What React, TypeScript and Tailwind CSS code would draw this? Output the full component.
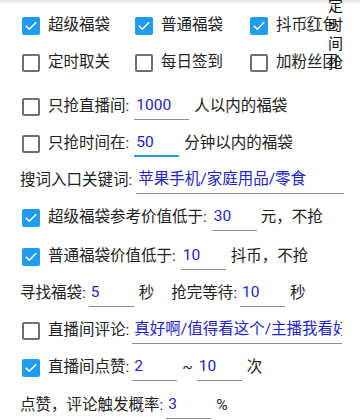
import * as React from "react";

const FONT = { fontFamily: '"Roboto", "Noto Sans CJK SC", sans-serif' };

const Check: React.FC<{ checked?: boolean }> = ({ checked }) =>
  checked ? (
    <span className="flex h-[18px] w-[18px] shrink-0 items-center justify-center rounded-[2px] bg-[#1f9cf0]">
      <svg width="14" height="14" viewBox="0 0 24 24" fill="none">
        <path d="M4 12.5l5 5L20 6.5" stroke="#fff" strokeWidth="2.6" strokeLinecap="square" />
      </svg>
    </span>
  ) : (
    <span className="h-[18px] w-[18px] shrink-0 rounded-[2px] border-2 border-[#6f6f6f]" />
  );

const Field: React.FC<{ value: string; w: number; focused?: boolean; className?: string }> = ({
  value,
  w,
  focused,
  className = "",
}) => (
  <span
    className={`flex h-[26px] shrink-0 items-start overflow-hidden whitespace-nowrap pl-[2px] text-[#2323cc] ${
      focused ? "border-b-2 border-[#1ea0e0]" : "border-b border-[#8c8c8c]"
    } ${className}`}
    style={{ width: w }}
  >
    {value}
  </span>
);

const Row: React.FC<{ children: React.ReactNode; className?: string }> = ({ children, className = "" }) => (
  <div className={`flex h-[37px] items-center whitespace-nowrap ${className}`}>{children}</div>
);

export default function App() {
  return (
    <div className="relative h-[420px] w-[360px] overflow-hidden bg-white text-[15.5px] text-[#222]" style={FONT}>
      {/* top shadow */}
      <div className="absolute left-0 right-0 top-0 h-[4px] bg-gradient-to-b from-[#e4e4e4] to-transparent" />

      <div className="pt-[7px]">
        <Row className="pl-[22px]">
          <div className="flex w-[113px] items-center gap-[8px]">
            <Check checked />
            <span>超级福袋</span>
          </div>
          <div className="flex w-[115px] items-center gap-[8px]">
            <Check checked />
            <span>普通福袋</span>
          </div>
          <div className="flex items-center gap-[8px]">
            <Check checked />
            <span>抖币红包</span>
          </div>
        </Row>
        <Row className="mb-[7px] pl-[22px]">
          <div className="flex w-[113px] items-center gap-[8px]">
            <Check />
            <span>定时取关</span>
          </div>
          <div className="flex w-[115px] items-center gap-[8px]">
            <Check />
            <span>每日签到</span>
          </div>
          <div className="flex items-center gap-[8px]">
            <Check />
            <span>加粉丝团</span>
          </div>
        </Row>

        <Row className="pl-[22px]">
          <Check />
          <span className="ml-[8px]">只抢直播间:</span>
          <Field value="1000" w={55} className="ml-[5px]" />
          <span className="ml-[5px]">人以内的福袋</span>
        </Row>
        <Row className="pl-[22px]">
          <Check />
          <span className="ml-[8px]">只抢时间在:</span>
          <Field value="50" w={45} focused className="ml-[5px]" />
          <span className="ml-[5px]">分钟以内的福袋</span>
        </Row>

        <Row className="pl-[20px]">
          <span>搜词入口关键词:</span>
          <Field value="苹果手机/家庭用品/零食" w={208} className="ml-[4px]" />
        </Row>

        <Row className="pl-[22px]">
          <Check checked />
          <span className="ml-[8px]">超级福袋参考价值低于:</span>
          <Field value="30" w={45} className="ml-[5px]" />
          <span className="ml-[4px]">元，不抢</span>
        </Row>
        <Row className="mt-[2px] pl-[22px]">
          <Check checked />
          <span className="ml-[8px]">普通福袋价值低于:</span>
          <Field value="10" w={45} className="ml-[5px]" />
          <span className="ml-[5px]">抖币，不抢</span>
        </Row>

        <Row className="pl-[20px]">
          <span>寻找福袋:</span>
          <Field value="5" w={45} className="ml-[3px]" />
          <span className="ml-[5px]">秒</span>
          <span className="ml-[17px]">抢完等待:</span>
          <Field value="10" w={45} className="ml-[3px]" />
          <span className="ml-[5px]">秒</span>
        </Row>

        <Row className="pl-[22px]">
          <Check />
          <span className="ml-[8px]">直播间评论:</span>
          <Field value="真好啊/值得看这个/主播我看好" w={210} className="ml-[3px]" />
        </Row>

        <Row className="pl-[22px]">
          <Check checked />
          <span className="ml-[8px]">直播间点赞:</span>
          <Field value="2" w={45} className="ml-[3px]" />
          <span className="ml-[5px]">~</span>
          <Field value="10" w={45} className="ml-[4px]" />
          <span className="ml-[5px]">次</span>
        </Row>

        <Row className="mt-[1px] pl-[20px]">
          <span>点赞，评论触发概率:</span>
          <Field value="3" w={45} className="ml-[3px]" />
          <span className="ml-[5px]">%</span>
        </Row>
      </div>

      {/* floating overlay */}
      <span className="absolute left-[304px] top-[16px] h-[16px] w-[16px] rounded-full border-[1.5px] border-[#6a6a6a]" />
      <div className="absolute left-[328px] top-[-3px] flex w-[17px] flex-col text-[15px] leading-[19px] text-[#111]">
        <span>定</span>
        <span>时</span>
        <span>间</span>
        <span>抢</span>
      </div>
    </div>
  );
}
